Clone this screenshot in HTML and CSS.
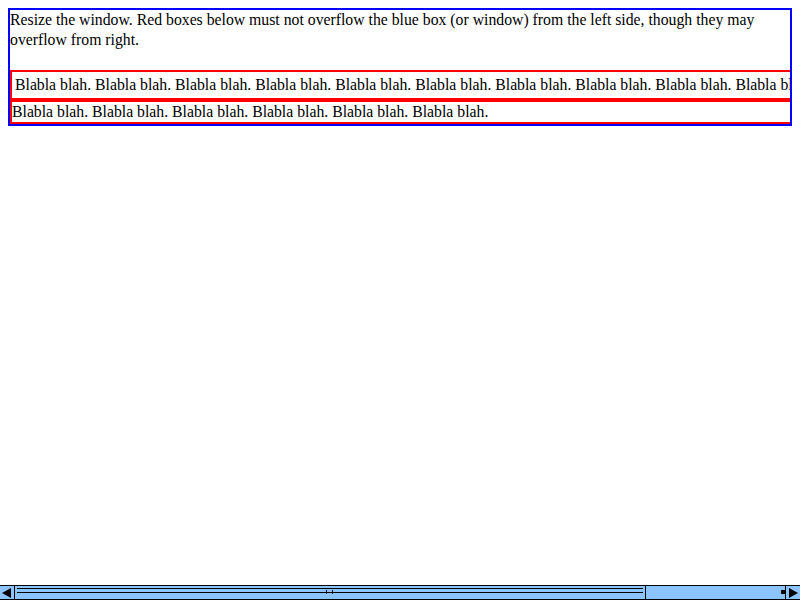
FILE: index.html
```html
<!DOCTYPE html>
<html>
<head>
<meta charset="utf-8">
<link rel="stylesheet" href="styles.css">
</head>
<body>
<div class="blue">
  <div class="intro">Resize the window. Red boxes below must not overflow the blue box (or window) from the left side, though they may overflow from right.</div>
  <div class="red red-one">Blabla blah. Blabla blah. Blabla blah. Blabla blah. Blabla blah. Blabla blah. Blabla blah. Blabla blah. Blabla blah. Blabla blah. Blabla blah. Blabla blah.</div>
  <div class="red red-two">Blabla blah. Blabla blah. Blabla blah. Blabla blah. Blabla blah. Blabla blah.</div>
</div>
<div class="hscroll">
  <div class="btn btn-left"><svg width="14" height="14" viewBox="0 0 14 14"><polygon points="2,7 11,2 11,12" fill="#000"/></svg></div>
  <div class="thumb"><span class="grip"></span></div>
  <div class="track"><span class="dash"></span></div>
  <div class="btn btn-right"><svg width="14" height="14" viewBox="0 0 14 14"><polygon points="12,7 3,2 3,12" fill="#000"/></svg></div>
</div>
</body>
</html>
```
FILE: styles.css
```css
html {
  overflow: hidden;
}
body {
  margin: 8px;
  font-family: "Liberation Serif", "Times New Roman", serif;
  font-size: 15.75px;
  line-height: 20px;
  color: #000;
  background: #fff;
}
.blue {
  padding: 2px;
  outline: 2px solid #0000ff;
  outline-offset: -2px;
}
.intro {
  margin-bottom: 20px;
}
.red {
  border: 2px solid #ff0000;
  width: 962px;
  white-space: nowrap;
}
.red-one {
  padding: 3px;
  width: 956px;
}
.hscroll {
  position: fixed;
  left: 0;
  right: 0;
  bottom: 0;
  height: 15px;
  box-sizing: border-box;
  border-top: 1px solid #000;
  border-bottom: 1px solid #000;
  background: #8cc4ff;
  display: flex;
}
.btn {
  display: flex;
  align-items: center;
  justify-content: center;
}
.btn-left {
  border-right: 1px solid #000;
  width: 14px;
}
.btn-right {
  border-left: 1px solid #000;
  width: 14px;
}
.thumb {
  width: 630px;
  border-right: 1px solid #000;
  position: relative;
}
.thumb::before,
.thumb::after {
  content: "";
  position: absolute;
  left: 2px;
  right: 2px;
  height: 1px;
  background: #000;
}
.thumb::before {
  top: 2px;
}
.thumb::after {
  top: 6px;
}
.grip {
  position: absolute;
  left: 311px;
  top: 4px;
  width: 5px;
  height: 4px;
  border-left: 1px solid #000;
  border-right: 1px solid #000;
}
.track {
  flex: 1;
  position: relative;
}
.dash {
  position: absolute;
  right: 0;
  top: 4px;
  width: 4px;
  height: 4px;
  background: #000;
}
```
